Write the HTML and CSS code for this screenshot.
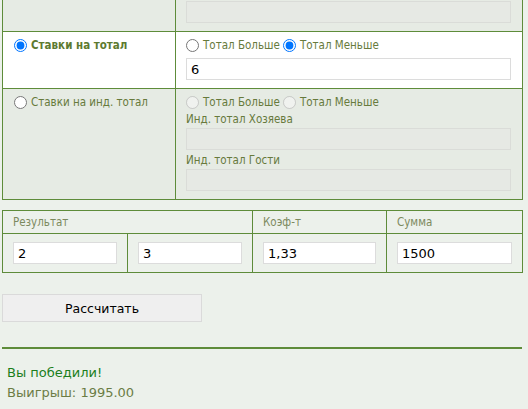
FILE: index.html
```html
<!DOCTYPE html>
<html lang="ru">
<head>
<meta charset="utf-8">
<title>Калькулятор ставок</title>
<link rel="stylesheet" href="styles.css">
</head>
<body>
<div class="page">
  <table class="bets">
    <colgroup><col class="c-left"><col class="c-right"></colgroup>
    <tr class="row-gray row-top">
      <td></td>
      <td><input class="field" type="text" disabled></td>
    </tr>
    <tr class="row-white">
      <td class="col-left"><label class="opt opt-bold"><input type="radio" name="kind" checked> Ставки на тотал</label></td>
      <td class="col-right">
        <div class="radios radios-main">
          <label class="opt"><input type="radio" name="tt"> Тотал Больше</label>
          <label class="opt"><input type="radio" name="tt" checked> Тотал Меньше</label>
        </div>
        <input class="field" type="text" value="6">
      </td>
    </tr>
    <tr class="row-gray">
      <td class="col-left"><label class="opt"><input type="radio" name="kind"> Ставки на инд. тотал</label></td>
      <td class="col-right">
        <div class="radios">
          <label class="opt"><input type="radio" name="it" disabled> Тотал Больше</label>
          <label class="opt"><input type="radio" name="it" disabled> Тотал Меньше</label>
        </div>
        <div class="cap">Инд. тотал Хозяева</div>
        <input class="field" type="text" disabled>
        <div class="cap">Инд. тотал Гости</div>
        <input class="field" type="text" disabled>
      </td>
    </tr>
  </table>

  <table class="result">
    <colgroup><col class="c-a"><col class="c-b"><col class="c-k"><col class="c-s"></colgroup>
    <tr class="head">
      <td colspan="2">Результат</td>
      <td>Коэф-т</td>
      <td>Сумма</td>
    </tr>
    <tr>
      <td><input class="field" type="text" value="2"></td>
      <td><input class="field" type="text" value="3"></td>
      <td><input class="field" type="text" value="1,33"></td>
      <td><input class="field" type="text" value="1500"></td>
    </tr>
  </table>

  <button class="calc" type="button">Рассчитать</button>

  <hr class="sep">

  <div class="msg win">Вы победили!</div>
  <div class="msg gain">Выигрыш: 1995.00</div>
</div>
</body>
</html>
```

FILE: styles.css
```css
html, body {
  margin: 0;
  padding: 0;
  background: #ecf1eb;
}
body {
  font-family: "DejaVu Sans Condensed", "DejaVu Sans", Verdana, sans-serif;
  font-size: 11.5px;
  color: #677a3c;
}
.page {
  padding: 0 6px 0 2px;
}
table {
  border-collapse: collapse;
  table-layout: fixed;
  width: 520px;
}
td {
  border: 1px solid #5e8c3a;
  vertical-align: top;
}
.c-left { width: 173px; }
.c-right { width: 347px; }
.row-top td {
  border-top: none;
  height: 30px;
  padding: 1px 11px 0 10px;
}
.row-gray td { background: #e6ebe4; }
.row-white td { background: #ffffff; }
.col-left {
  padding: 6px 8px 8px 8px;
}
.col-right {
  padding: 6px 11px 8px 10px;
}
.opt {
  display: inline-flex;
  align-items: center;
  line-height: 14px;
  white-space: nowrap;
}
.opt input {
  margin: 0 4px 0 3px;
  width: 13px;
  height: 13px;
}
.opt-bold {
  font-weight: bold;
  color: #5d7a30;
}
.radios {
  display: flex;
  height: 14px;
}
.radios-main { margin-bottom: 6px; }
.radios .opt input { margin-left: 0; }
.radios .opt + .opt input { margin-left: 3px; }
.field {
  display: block;
  box-sizing: border-box;
  width: 100%;
  height: 22px;
  border: 1px solid #dcdcdc;
  background: #ffffff;
  font-family: "DejaVu Sans", Verdana, sans-serif;
  font-size: 13px;
  color: #000;
  padding: 0 4px;
  margin: 0;
}
.field:disabled {
  background: #e6e9e4;
  border-color: #dadcd8;
}
.cap {
  line-height: 14px;
  margin: 3px 0 2px;
}

.result {
  margin-top: 10px;
}
.c-a { width: 125px; }
.c-b { width: 125px; }
.c-k { width: 134px; }
.c-s { width: 136px; }
.result td {
  padding: 8px 10px 8px 10px;
}
.result .head td {
  height: 9px;
  line-height: 9px;
  padding: 7px 10px 6px 10px;
  color: #7c8a5e;
}

.calc {
  display: block;
  margin-top: 21px;
  width: 200px;
  height: 28px;
  background: #efefef;
  border: 1px solid #dadada;
  font-family: "DejaVu Sans", Verdana, sans-serif;
  font-size: 12.5px;
  color: #000;
  padding: 0;
}
.sep {
  width: 520px;
  margin: 25px 0 0 0;
  border: none;
  height: 2px;
  background: #5e8c3a;
}
.msg {
  font-family: "DejaVu Sans", Verdana, sans-serif;
  font-size: 13px;
  line-height: 20px;
  padding-left: 5px;
}
.win {
  margin-top: 14px;
  color: #1b7f1c;
}
.gain {
  color: #6b7d45;
}
```
